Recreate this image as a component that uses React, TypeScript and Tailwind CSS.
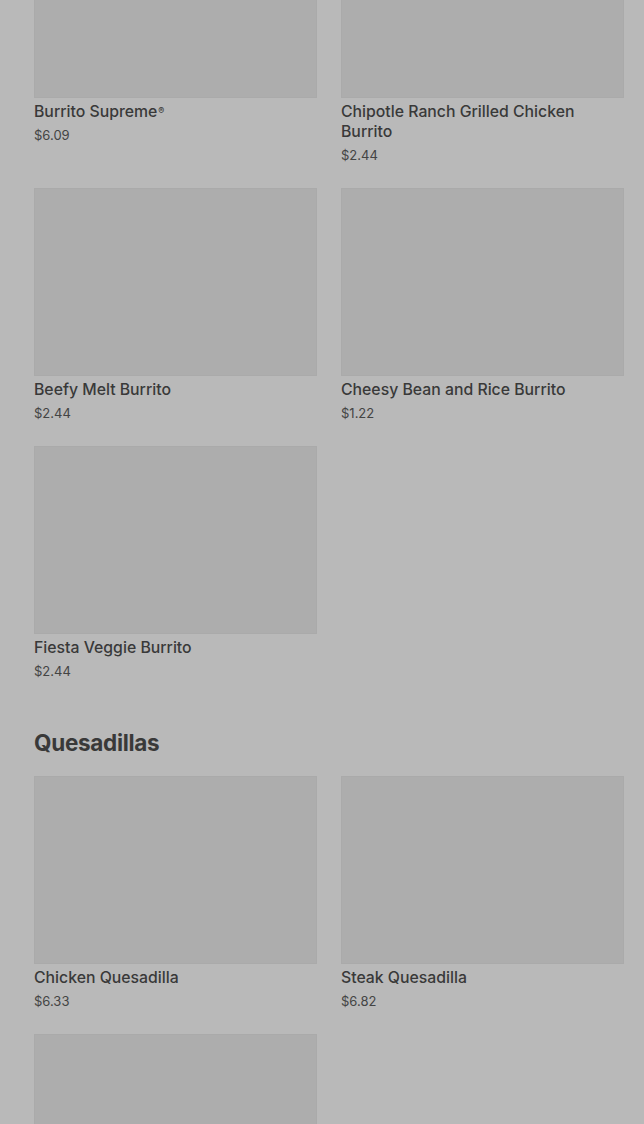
import React from "react";

type Item = { name: string; price: string; reg?: boolean };

const burritosTop: Item[] = [
  { name: "Burrito Supreme", price: "$6.09", reg: true },
  { name: "Chipotle Ranch Grilled Chicken Burrito", price: "$2.44" },
  { name: "Beefy Melt Burrito", price: "$2.44" },
  { name: "Cheesy Bean and Rice Burrito", price: "$1.22" },
  { name: "Fiesta Veggie Burrito", price: "$2.44" },
];

const quesadillas: Item[] = [
  { name: "Chicken Quesadilla", price: "$6.33" },
  { name: "Steak Quesadilla", price: "$6.82" },
  { name: "", price: "" },
];

function Card({ item }: { item: Item }) {
  return (
    <div className="flex flex-col">
      <div className="h-[188px] w-full bg-[#adadad] border border-[#aaaaaa]" />
      {item.name && (
        <>
          <div className="mt-[4px] text-[15.8px] leading-[20px] font-medium text-[#393939]">
            {item.name}
            {item.reg && (
              <span className="text-[9px] ml-[1px] align-top relative -top-[1px]">®</span>
            )}
          </div>
          <div className="mt-[5px] text-[13px] leading-[16px] text-[#444444]">{item.price}</div>
        </>
      )}
    </div>
  );
}

export default function App() {
  return (
    <div
      className="w-[644px] h-[1124px] overflow-hidden bg-[#b9b9b9]"
      style={{ fontFamily: "Inter, 'Noto Sans', sans-serif" }}
    >
      <div className="pl-[34px] pr-[20px] -mt-[90px]">
        <div className="grid grid-cols-2 gap-x-[24px] gap-y-[25px]">
          {burritosTop.map((it, i) => (
            <Card key={i} item={it} />
          ))}
        </div>
        <h2 className="mt-[50px] text-[22.5px] leading-[28px] font-bold text-[#393939] tracking-[-0.3px]">
          Quesadillas
        </h2>
        <div className="mt-[19px] grid grid-cols-2 gap-x-[24px] gap-y-[25px]">
          {quesadillas.map((it, i) => (
            <Card key={i} item={it} />
          ))}
        </div>
      </div>
    </div>
  );
}
